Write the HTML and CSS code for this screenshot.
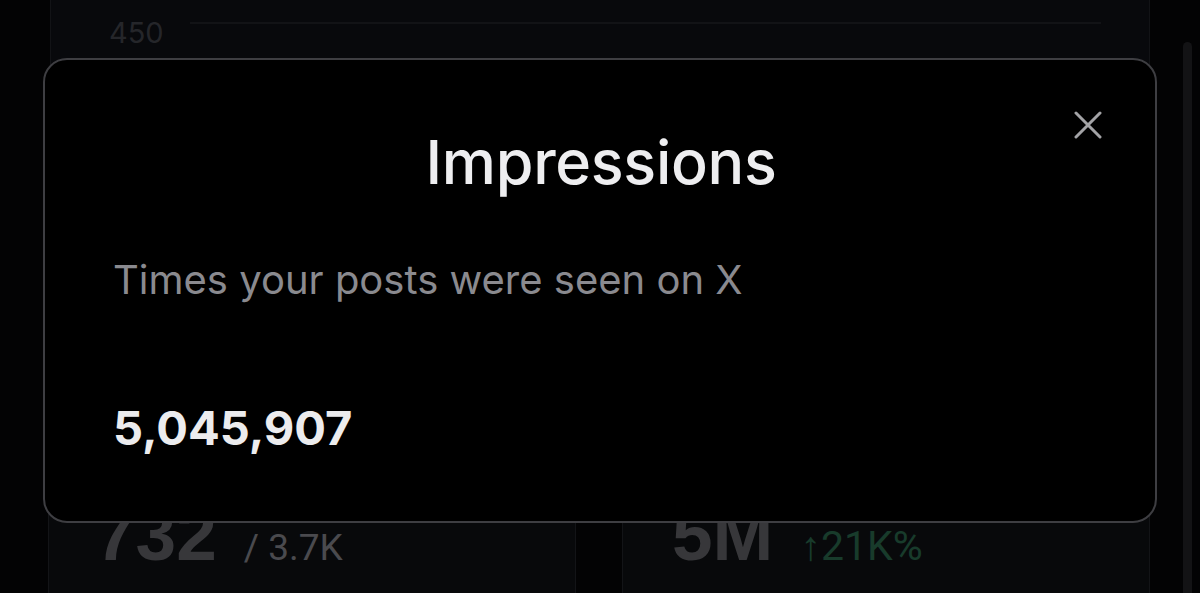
FILE: index.html
```html
<!DOCTYPE html>
<html lang="en">
<head>
<meta charset="utf-8">
<title>Impressions</title>
<link rel="stylesheet" href="styles.css">
</head>
<body>
<div class="page">
  <section class="chart-card">
    <div class="grid-row">
      <span class="axis-label">450</span>
      <span class="grid-line"></span>
    </div>
  </section>
  <div class="stats">
    <section class="stat-card">
      <div class="stat">
        <span class="stat-value">732</span>
        <span class="stat-sub">/ 3.7K</span>
      </div>
    </section>
    <section class="stat-card">
      <div class="stat">
        <span class="stat-value">5M</span>
        <span class="stat-sub up">↑21K%</span>
      </div>
    </section>
  </div>
</div>
<div class="scrollbar"></div>

<div class="modal" role="dialog" aria-label="Impressions">
  <button class="close" aria-label="Close">
    <svg viewBox="0 0 28 28" width="28" height="28"><path d="M2 2 L26 26 M26 2 L2 26" stroke="currentColor" stroke-width="3" stroke-linecap="round" fill="none"/></svg>
  </button>
  <h1 class="title">Impressions</h1>
  <p class="desc">Times your posts were seen on X</p>
  <div class="value">5,045,907</div>
</div>
</body>
</html>
```
FILE: styles.css
```css
* { box-sizing: border-box; }
html, body { margin: 0; height: 100%; }
body {
  background: #030304;
  overflow: hidden;
  font-family: Inter, "Liberation Sans", sans-serif;
  position: relative;
}
.page {
  padding: 0 50px 0 48px;
  display: flex;
  flex-direction: column;
  gap: 24px;
}
.chart-card {
  margin: -30px 0 0 2px;
  height: 470px;
  background: #08090c;
  border: 1px solid #121316;
  border-radius: 24px;
  padding: 51px 48px 0 58px;
}
.grid-row {
  display: flex;
  align-items: flex-start;
  gap: 26px;
}
.axis-label {
  font-size: 29px;
  line-height: 22px;
  color: #25262a;
}
.grid-line {
  flex: 1;
  height: 2px;
  background: #121316;
}
.stats {
  display: grid;
  grid-template-columns: 1fr 1fr;
  gap: 46px;
}
.stat-card {
  height: 160px;
  background: #08090b;
  border: 1px solid #131417;
  border-radius: 24px;
  padding: 33px 48px 0 46px;
}
.stat-card + .stat-card { padding-left: 49px; }
.stat {
  display: flex;
  align-items: baseline;
  gap: 27px;
}
.stat-value {
  font-family: "Liberation Sans", Arial, sans-serif;
  font-weight: 700;
  font-size: 73px;
  line-height: 1;
  color: #37373a;
}
.stat-sub {
  font-family: Roboto, "Liberation Sans", sans-serif;
  font-size: 37px;
  color: #4a4a4e;
}
.stat-sub.up { color: #183b2b; font-size: 41px; }
.scrollbar {
  position: absolute;
  right: 8px;
  top: 42px;
  width: 9px;
  height: 600px;
  border-radius: 5px;
  background: #131315;
}
.modal {
  position: absolute;
  left: 43px;
  top: 58px;
  width: 1114px;
  height: 465px;
  background: #000;
  border: 2px solid #3e3e42;
  border-radius: 24px;
  padding: 72px 66px 0 68px;
  display: flex;
  flex-direction: column;
}
.close {
  position: absolute;
  top: 51px;
  right: 53px;
  width: 28px;
  height: 28px;
  padding: 0;
  border: 0;
  background: none;
  color: #a3a3a6;
  display: flex;
}
.title {
  margin: 0;
  text-align: center;
  font-size: 61px;
  line-height: 61px;
  font-weight: 500;
  color: #eeeef0;
  letter-spacing: -0.3px;
}
.desc {
  margin: 67px 0 0;
  font-size: 40px;
  line-height: 40px;
  color: #8a8a8f;
}
.value {
  margin-top: 104px;
  font-weight: 700;
  font-size: 47px;
  line-height: 48px;
  color: #ececee;
}
```
